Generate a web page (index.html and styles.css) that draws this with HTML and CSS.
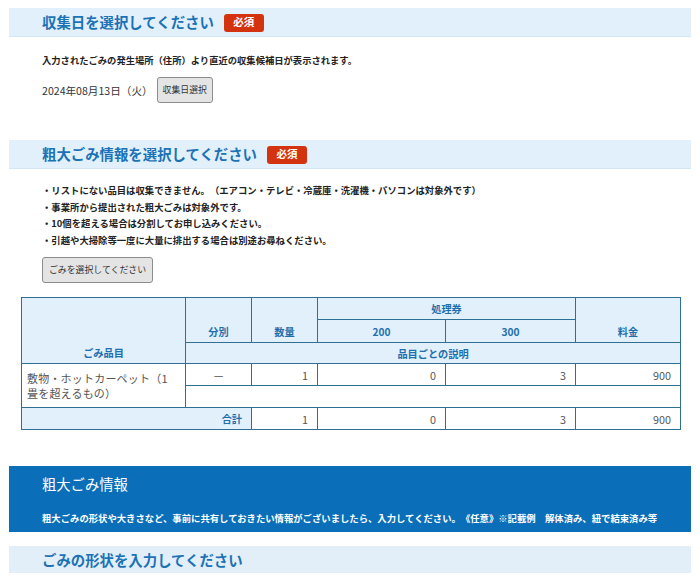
FILE: index.html
```html
<!DOCTYPE html>
<html lang="ja">
<head>
<meta charset="utf-8">
<title>粗大ごみ申込</title>
<link rel="stylesheet" href="styles.css">
</head>
<body>
<section class="sec sec-date">
  <h2 class="sec-head"><span class="sec-title">収集日を選択してください</span><span class="badge">必須</span></h2>
  <p class="note">入力されたごみの発生場所（住所）より直近の収集候補日が表示されます。</p>
  <div class="date-row"><span class="date">2024年08月13日（火）</span><button class="btn btn-date" type="button">収集日選択</button></div>
</section>

<section class="sec sec-items">
  <h2 class="sec-head"><span class="sec-title">粗大ごみ情報を選択してください</span><span class="badge">必須</span></h2>
  <ul class="rules">
    <li>・リストにない品目は収集できません。（エアコン・テレビ・冷蔵庫・洗濯機・パソコンは対象外です）</li>
    <li>・事業所から提出された粗大ごみは対象外です。</li>
    <li>・10個を超える場合は分割してお申し込みください。</li>
    <li>・引越や大掃除等一度に大量に排出する場合は別途お尋ねください。</li>
  </ul>
  <button class="btn btn-select" type="button">ごみを選択してください</button>
  <table class="items">
    <colgroup>
      <col class="c-name"><col class="c-kind"><col class="c-qty"><col class="c-t200"><col class="c-t300"><col class="c-fee">
    </colgroup>
    <thead>
      <tr class="r1">
        <th rowspan="3">ごみ品目</th>
        <th rowspan="2">分別</th>
        <th rowspan="2">数量</th>
        <th colspan="2">処理券</th>
        <th rowspan="2">料金</th>
      </tr>
      <tr class="r2">
        <th>200</th>
        <th>300</th>
      </tr>
      <tr class="r3">
        <th colspan="5">品目ごとの説明</th>
      </tr>
    </thead>
    <tbody>
      <tr class="r4">
        <td rowspan="2" class="name">敷物・ホットカーペット（1畳を超えるもの）</td>
        <td class="center">—</td>
        <td class="num">1</td>
        <td class="num">0</td>
        <td class="num">3</td>
        <td class="num">900</td>
      </tr>
      <tr class="r5">
        <td colspan="5"></td>
      </tr>
      <tr class="r6">
        <th colspan="2" class="total">合計</th>
        <td class="num">1</td>
        <td class="num">0</td>
        <td class="num">3</td>
        <td class="num">900</td>
      </tr>
    </tbody>
  </table>
</section>

<section class="info">
  <h2 class="info-title">粗大ごみ情報</h2>
  <p class="info-text">粗大ごみの形状や大きさなど、事前に共有しておきたい情報がございましたら、入力してください。《任意》※記載例　解体済み、紐で結束済み等</p>
</section>

<section class="sec sec-shape">
  <h2 class="sec-head sec-head-last"><span class="sec-title">ごみの形状を入力してください</span></h2>
</section>
</body>
</html>
```

FILE: styles.css
```css
html, body {
  margin: 0;
  padding: 0;
  background: #ffffff;
}

body {
  padding: 8px 9px 0 9px;
  font-family: "Noto Sans CJK JP", "Noto Sans", sans-serif;
  color: #222222;
  text-spacing-trim: space-all;
}

.sec {
  margin: 0;
}

.sec-head {
  display: flex;
  align-items: center;
  gap: 10px;
  height: 29px;
  margin: 0;
  padding: 1px 0 0 33px;
  box-sizing: border-box;
  background: #e1f0fa;
  border-bottom: 1px solid #d3e6f3;
}

.sec-title {
  font-size: 14.4px;
  font-weight: bold;
  color: #1c72b6;
  line-height: 1;
}

.badge {
  display: inline-flex;
  align-items: center;
  justify-content: center;
  width: 40px;
  height: 18px;
  border-radius: 3px;
  background: #d4330f;
  color: #ffffff;
  font-size: 10.5px;
  font-weight: bold;
  line-height: 1;
}

.note {
  margin: 16px 0 0 33px;
  font-size: 9.3px;
  font-weight: bold;
  line-height: 14px;
  color: #222222;
}

.date-row {
  display: flex;
  align-items: center;
  gap: 4px;
  margin: 10px 0 0 33px;
}

.date {
  font-size: 10.6px;
  color: #333333;
}

.btn {
  font-family: "Noto Sans CJK JP", "Noto Sans", sans-serif;
  font-size: 8.9px;
  color: #333333;
  background: #e4e4e4;
  border: 1px solid #8c8c8c;
  border-radius: 3px;
  height: 26px;
  padding: 0 5px;
  line-height: 1;
  white-space: nowrap;
}

.sec-items {
  margin-top: 37px;
}

.rules {
  list-style: none;
  margin: 13px 0 0 33px;
  padding: 0;
}

.rules li {
  font-size: 9.35px;
  font-weight: bold;
  line-height: 16.5px;
  color: #222222;
}

.btn-select {
  display: block;
  margin: 9px 0 0 33px;
  width: 111px;
}

.items {
  margin: 14px 0 0 12px;
  width: 659px;
  table-layout: fixed;
  border-collapse: collapse;
  font-size: 10.8px;
}

.c-name { width: 164px; }
.c-kind { width: 66px; }
.c-qty { width: 66px; }
.c-t200 { width: 128px; }
.c-t300 { width: 130px; }
.c-fee { width: 105px; }

.items th,
.items td {
  border: 1px solid #2f6f92;
  padding: 0 9px;
  height: 21px;
  box-sizing: border-box;
}

.items th {
  background: #e1f0fa;
  color: #1f6fae;
  font-weight: bold;
  font-size: 10.2px;
  text-align: center;
  vertical-align: bottom;
  padding-bottom: 3px;
}

.items .r1 th[colspan] {
  vertical-align: middle;
  padding-bottom: 0;
}

.items .r2 th,
.items .r3 th {
  vertical-align: middle;
  padding-bottom: 0;
}

.items .r1 th { height: 22px; }
.items .r2 th { height: 23px; }
.items .r3 th { height: 21px; }

.items td {
  background: #ffffff;
  color: #555555;
  height: 22px;
}

.items .num {
  text-align: right;
}

.items .center {
  text-align: center;
}

.items .name {
  text-align: left;
  padding: 0 14px 0 5px;
  letter-spacing: 0.2px;
  line-height: 15px;
  font-size: 11px;
  vertical-align: middle;
}

.items .total {
  text-align: right;
  vertical-align: middle;
  padding: 0 9px 0 0;
  height: 22px;
}

.info {
  margin-top: 36px;
  height: 66px;
  box-sizing: border-box;
  background: #0a6eb9;
  padding: 9px 0 0 33px;
  color: #ffffff;
}

.info-title {
  margin: 0;
  font-size: 14.3px;
  font-weight: normal;
  line-height: 18px;
}

.info-text {
  margin: 19px 0 0 0;
  font-size: 9.35px;
  font-weight: bold;
  line-height: 12px;
}

.sec-shape {
  margin-top: 14px;
}

.sec-head-last {
  height: 27px;
  background: #e2eef8;
  border-bottom: none;
}
```
